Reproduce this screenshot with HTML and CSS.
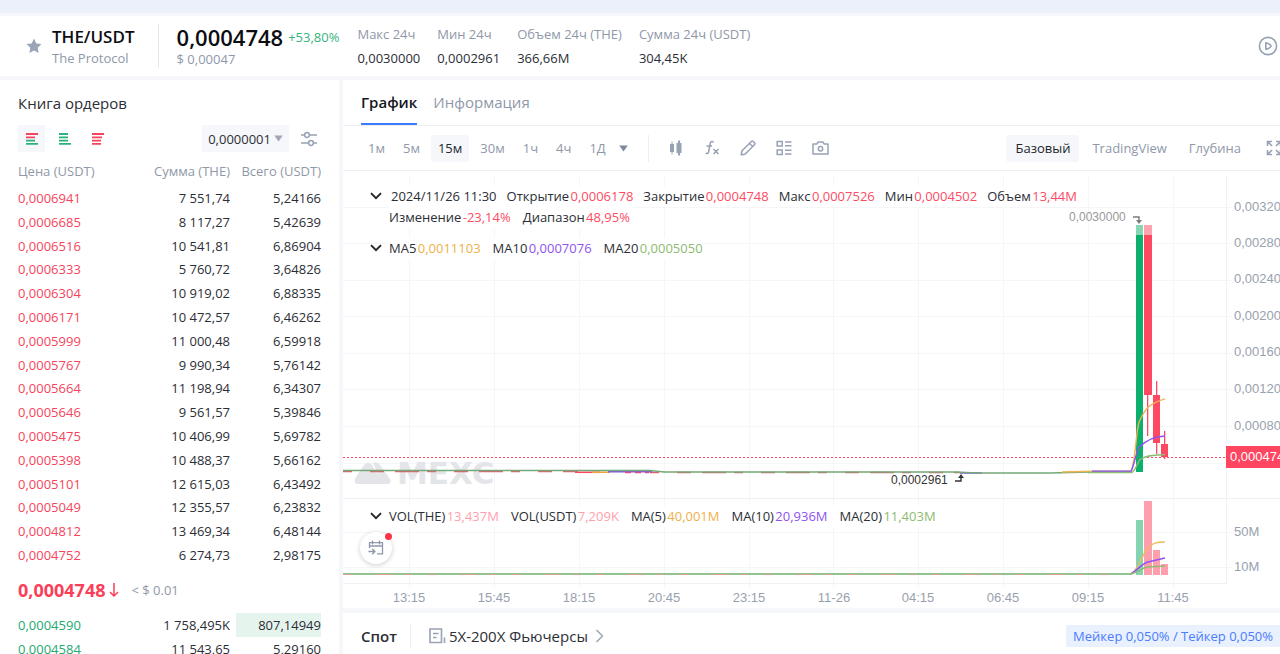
FILE: index.html
```html
<!DOCTYPE html>
<html lang="ru">
<head>
<meta charset="utf-8">
<title>THE/USDT</title>
<meta name="viewport" content="width=device-width, initial-scale=1">
<link rel="stylesheet" href="styles.css">
</head>
<body>
<div class="page">
  <div class="top-strip"></div>
  <header class="ticker">
    <button class="icon-btn star" aria-label="В избранное"><svg width="16" height="16" viewBox="0 0 16 16"><path d="M8 0.6l2.3 4.8 5.2.7-3.8 3.6.9 5.3L8 12.5 3.4 15l.9-5.3L.5 6.1l5.2-.7z" fill="#9aa5b8"/></svg></button>
    <div class="pair"><h1 class="pair-name">THE/USDT</h1><div class="sub">The Protocol</div></div>
    <div class="last">
      <div class="last-row"><span class="last-price">0,0004748</span><span class="up">+53,80%</span></div>
      <div class="sub">$ 0,00047</div>
    </div>
    <dl class="stats">
      <div class="stat"><dt>Макс 24ч</dt><dd>0,0030000</dd></div>
      <div class="stat"><dt>Мин 24ч</dt><dd>0,0002961</dd></div>
      <div class="stat"><dt>Объем 24ч (THE)</dt><dd>366,66M</dd></div>
      <div class="stat"><dt>Сумма 24ч (USDT)</dt><dd>304,45K</dd></div>
    </dl>
    <button class="icon-btn play" aria-label="Обучение"><svg width="20" height="20" viewBox="0 0 20 20" fill="none" stroke="#98a2b5" stroke-width="1.6"><circle cx="10" cy="10" r="8.6"/><path d="M7.8 6.7v6.6c2.600-.6 4.700-1.900 5.200-3.300-.5-1.400-2.600-2.700-5.200-3.300z" stroke-linejoin="round"/></svg></button>
  </header>

  <div class="columns">
    <section class="book">
      <h2 class="book-title">Книга ордеров</h2>
      <div class="book-tools">
        <button class="mode active" aria-label="Все ордера"><svg width="14" height="12" viewBox="0 0 14 12"><path d="M1 1h12M1 4.300h9" stroke="#f5455c" stroke-width="1.800"/><path d="M1 7.600h9M1 10.900h12" stroke="#2bb27a" stroke-width="1.800"/></svg></button>
        <button class="mode" aria-label="Покупка"><svg width="14" height="12" viewBox="0 0 14 12"><path d="M1 1h9M1 4.300h9M1 7.600h9M1 10.900h12" stroke="#2bb27a" stroke-width="1.800"/></svg></button>
        <button class="mode" aria-label="Продажа"><svg width="14" height="12" viewBox="0 0 14 12"><path d="M1 1h12M1 4.300h10M1 7.600h9M1 10.900h9" stroke="#f5455c" stroke-width="1.800"/></svg></button>
        <button class="precision">0,0000001<svg width="9" height="7" viewBox="0 0 9 7"><path d="M.3.5h8.400L4.500 6.500z" fill="#a0a6b2"/></svg></button>
        <button class="icon-btn" aria-label="Настройки"><svg width="16" height="16" viewBox="0 0 16 16" fill="none" stroke="#98a2b5" stroke-width="1.500"><path d="M0 4h3.500M8.500 4H16M0 12h7.500M12.500 12H16"/><circle cx="6" cy="4" r="2.400"/><circle cx="10" cy="12" r="2.400"/></svg></button>
      </div>
      <table class="orders asks">
        <thead><tr><th>Цена (USDT)</th><th>Сумма (THE)</th><th>Всего (USDT)</th></tr></thead>
        <tbody>
        <tr><td>0,0006941</td><td>7 551,74</td><td>5,24166</td></tr>
        <tr><td>0,0006685</td><td>8 117,27</td><td>5,42639</td></tr>
        <tr><td>0,0006516</td><td>10 541,81</td><td>6,86904</td></tr>
        <tr><td>0,0006333</td><td>5 760,72</td><td>3,64826</td></tr>
        <tr><td>0,0006304</td><td>10 919,02</td><td>6,88335</td></tr>
        <tr><td>0,0006171</td><td>10 472,57</td><td>6,46262</td></tr>
        <tr><td>0,0005999</td><td>11 000,48</td><td>6,59918</td></tr>
        <tr><td>0,0005767</td><td>9 990,34</td><td>5,76142</td></tr>
        <tr><td>0,0005664</td><td>11 198,94</td><td>6,34307</td></tr>
        <tr><td>0,0005646</td><td>9 561,57</td><td>5,39846</td></tr>
        <tr><td>0,0005475</td><td>10 406,99</td><td>5,69782</td></tr>
        <tr><td>0,0005398</td><td>10 488,37</td><td>5,66162</td></tr>
        <tr><td>0,0005101</td><td>12 615,03</td><td>6,43492</td></tr>
        <tr><td>0,0005049</td><td>12 355,57</td><td>6,23832</td></tr>
        <tr><td>0,0004812</td><td>13 469,34</td><td>6,48144</td></tr>
        <tr><td>0,0004752</td><td>6 274,73</td><td>2,98175</td></tr>
        </tbody>
      </table>
      <div class="mid"><span class="mid-price">0,0004748</span><svg width="12" height="14" viewBox="0 0 12 14" fill="none" stroke="#fb3f5a" stroke-width="1.500"><path d="M6 0v13M2 9l4 4 4-4"/></svg><span class="sub">&lt; $ 0.01</span></div>
      <table class="orders bids">
        <tbody>
        <tr><td>0,0004590</td><td>1 758,495K</td><td class="depth">807,14949</td></tr>
        <tr><td>0,0004584</td><td>11 543,65</td><td>5,29160</td></tr>
        </tbody>
      </table>
    </section>

    <main class="main">
      <section class="chart-card">
        <nav class="tabs"><button class="tab active">График</button><button class="tab">Информация</button></nav>
        <div class="toolbar">
          <div class="frames">
            <button class="chip">1м</button><button class="chip">5м</button><button class="chip active">15м</button><button class="chip">30м</button><button class="chip">1ч</button><button class="chip">4ч</button><button class="chip">1Д</button>
            <button class="icon-btn more" aria-label="Другие интервалы"><svg width="9" height="7" viewBox="0 0 9 7"><path d="M.2.5h8.600L4.500 6.500z" fill="#7f899c"/></svg></button>
          </div>
          <div class="tools">
            <button class="icon-btn" aria-label="Тип графика"><svg width="16" height="16" viewBox="0 0 16 16" fill="#98a2b5"><path d="M2 4h1.500V1.500h1V4H6v8H4.500v2.500h-1V12H2zM8.500 3H10V.5h2V3h1.500v10H12v2.500h-2V13H8.500z"/></svg></button>
            <button class="icon-btn" aria-label="Индикаторы"><svg width="16" height="16" viewBox="0 0 16 16" fill="none" stroke="#98a2b5" stroke-width="1.500"><path d="M9.500 2.500C8.800 1 6.600 1.200 6.200 3.500L4.600 12c-.4 1.800-2 2-3 1M2.500 6h5.500M9.500 9l5 5M14.500 9l-5 5"/></svg></button>
            <button class="icon-btn" aria-label="Рисование"><svg width="16" height="16" viewBox="0 0 16 16" fill="none" stroke="#98a2b5" stroke-width="1.500" stroke-linejoin="round"><path d="M1.200 14.800l.6-3.800L11.300 1.500q1-.8 2 0l1.200 1.200q.8 1 0 2L5 14.200zM9.500 3.500l3 3"/></svg></button>
            <button class="icon-btn" aria-label="Макет"><svg width="16" height="16" viewBox="0 0 16 16" fill="none" stroke="#98a2b5" stroke-width="1.500"><path d="M1.200 1.500h5v4.500h-5zM1.200 10h5v4.500h-5zM9 2h6.500M9 5.700h6.500M9 10.300h6.500M9 14h6.500"/></svg></button>
            <button class="icon-btn" aria-label="Снимок"><svg width="17" height="16" viewBox="0 0 17 16" fill="none" stroke="#98a2b5" stroke-width="1.500" stroke-linejoin="round"><path d="M1 4h3.800l1.400-2h4.600l1.400 2H16v10H1z"/><circle cx="8.500" cy="8.700" r="2.200"/></svg></button>
          </div>
          <div class="views">
            <button class="chip active">Базовый</button><button class="chip">TradingView</button><button class="chip">Глубина</button>
            <button class="icon-btn full" aria-label="На весь экран"><svg width="16" height="16" viewBox="0 0 16 16" fill="none" stroke="#98a2b5" stroke-width="1.600"><path d="M1.500 6V1.500H6M1.500 1.500L6 6M10 1.500h4.500V6M14.500 1.500L10 6M1.500 10v4.500H6M1.500 14.500L6 10M10 14.500h4.500V10M14.500 14.500L10 10"/></svg></button>
          </div>
        </div>
        <div class="chart">
          <svg class="plot" viewBox="343 171 937 437" role="img" aria-label="График THE/USDT">
            <path class="grid" d="M343 207.500h889M343 243.500h889M343 280.500h889M343 316.500h889M343 353.500h889M343 389.500h889M343 426.500h889M343 463.500h889M343 532.500h889M343 567.500h889M409.500 176v412M494.500 176v412M579.500 176v412M664.500 176v412M749.500 176v412M833.500 176v412M918.500 176v412M1003.500 176v412M1088.500 176v412M1173.500 176v412"/>
            <path class="grid pane" d="M343 498.500h937M343 583.500h883M1226.500 176v408"/>
            <g fill="#e3e5e9">
              <path d="M356 484q-3-3 0-7l8-12q4-5 8 0l12 19zM373 463q4-2 7 2l10 14q2 4-2 5h-5z"/>
              <text class="mark" x="397" y="484">MEXC</text>
            </g>
            <g class="axis">
              <text x="1234" y="211">0,00320</text><text x="1234" y="247">0,00280</text><text x="1234" y="283">0,00240</text><text x="1234" y="320">0,00200</text><text x="1234" y="356">0,00160</text><text x="1234" y="393">0,00120</text><text x="1234" y="430">0,00080</text>
              <text x="1234" y="536">50M</text><text x="1234" y="571">10M</text>
            </g>
            <g class="axis time">
              <text x="409" y="602">13:15</text><text x="494" y="602">15:45</text><text x="579" y="602">18:15</text><text x="664" y="602">20:45</text><text x="749" y="602">23:15</text><text x="834" y="602">11-26</text><text x="918" y="602">04:15</text><text x="1003" y="602">06:45</text><text x="1088" y="602">09:15</text><text x="1173" y="602">11:45</text>
            </g>
            <path d="M343 457.500h883" fill="none" stroke="#ff4d66" stroke-width="1" stroke-dasharray="2 2"/>
            <g fill="none" stroke-width="1.500">
              <path d="M343 471.500h235M650 472.500h310" stroke="#e2606e" stroke-dasharray="9 18 14 11 24 8"/>
              <path d="M575 472.300h25" stroke="#ff4560"/><path d="M592 472.300h18" stroke="#f0a43c"/><path d="M608 471.800h44M960 473h22" stroke="#8655e8"/><path d="M625 472.500h24" stroke="#e04a86" stroke-dasharray="6 4"/>
              <path d="M343 470.500h307l14 1.500h292l20 1h74l40-1h42" stroke="#74a877"/>
            </g>
            <path fill="#0caf6b" d="M1136 235h7v237h-7z"/><path fill="#87d7b5" d="M1136 225h7v10h-7z"/>
            <path fill="#ff4861" d="M1144 235h8v160h-8zM1147 395h1.300v41h-1.300zM1153 395h7v48h-7zM1156 381h1.300v73h-1.300zM1161 444h7v13h-7zM1164 431h1.300v28h-1.300z"/><path fill="#ffa3b0" d="M1144 225h8v10h-8z"/>
            <g fill="none" stroke-width="1.400">
              <path d="M1062 472l30-.8h39c4-6 5-39 8-49 4-9 6-12 9-15 6-5 12-7 17-8.400" stroke="#efb351"/>
              <path d="M1092 471.300h39c3-5 5-19 8-24 7-7 17-11 26-11.300" stroke="#8e52f1"/>
              <path d="M1088 472.500h44c4-3 5-9 8-13 7-5 15-4 25-5" stroke="#8dbb70"/>
            </g>
            <text class="note light" x="1069" y="221">0,0030000</text>
            <path d="M1133 217h6v4" fill="none" stroke="#7c7c7c" stroke-width="1.400"/><path d="M1136 220h6l-3 4z" fill="#7c7c7c"/>
            <text class="note" x="891" y="484">0,0002961</text>
            <path d="M955 481h6v-4" fill="none" stroke="#333" stroke-width="1.400"/><path d="M958 478h6l-3-4z" fill="#333"/>
            <path fill="#ff4560" d="M1226 446h54v22h-54z"/><text class="tag" x="1230" y="461">0,000474</text>
            <path fill="#84d3b1" d="M1136 520h7v55h-7z"/><path fill="#ff9fae" d="M1144 501h8v74h-8zM1153 550h7v25h-7zM1161 564h7v11h-7z"/>
            <g fill="none" stroke-width="1.500">
              <path d="M343 574h788" stroke="#90c490" stroke-width="2"/><path d="M343 574.500h788" stroke="#d5a78f" stroke-width="1" stroke-dasharray="10 22 18 12 7 15"/>
              <path d="M1131 574c8-5 10-18 17-26 4-5 9-6 17-6" stroke="#f1b95f"/><path d="M1131 574c8-5 10-10 17-12l17-4" stroke="#8e52f1"/><path d="M1131 574c8-2 10-6 17-7l17-1" stroke="#8dbb70"/>
            </g>
          </svg>
          <div class="legends">
            <div class="legend"><button class="icon-btn fold" aria-label="Свернуть"><svg width="12" height="8" viewBox="0 0 12 8" fill="none" stroke="#222" stroke-width="1.800"><path d="M1 1.200l5 5 5-5"/></svg></button>
              <div>
                <div class="legend-row tight"><span class="date">2024/11/26 11:30</span><span>Открытие <b>0,0006178</b></span><span>Закрытие <b>0,0004748</b></span><span>Макс <b>0,0007526</b></span><span>Мин <b>0,0004502</b></span><span>Объем <b>13,44M</b></span></div>
                <div class="legend-row"><span>Изменение <b>-23,14%</b></span><span>Диапазон <b>48,95%</b></span></div>
              </div></div>
            <div class="legend"><button class="icon-btn fold" aria-label="Свернуть"><svg width="12" height="8" viewBox="0 0 12 8" fill="none" stroke="#222" stroke-width="1.800"><path d="M1 1.200l5 5 5-5"/></svg></button>
              <div class="legend-row"><span>MA5 <b class="ma5">0,0011103</b></span><span>MA10 <b class="ma10">0,0007076</b></span><span>MA20 <b class="ma20">0,0005050</b></span></div></div>
          </div>
          <div class="legends volume">
            <div class="legend"><button class="icon-btn fold" aria-label="Свернуть"><svg width="12" height="8" viewBox="0 0 12 8" fill="none" stroke="#222" stroke-width="1.800"><path d="M1 1.200l5 5 5-5"/></svg></button>
              <div class="legend-row"><span>VOL(THE) <b class="soft">13,437M</b></span><span>VOL(USDT) <b class="soft">7,209K</b></span><span>MA(5) <b class="ma5">40,001M</b></span><span>MA(10) <b class="ma10">20,936M</b></span><span>MA(20) <b class="ma20">11,403M</b></span></div></div>
          </div>
          <button class="goto" aria-label="Перейти к дате"><svg width="16" height="16" viewBox="0 0 16 16" fill="none" stroke="#8e98ab" stroke-width="1.300"><path d="M1.500 8V2.700h13v11.200H9M1.500 6h13M4.500.5v4M11.500.5v4M.5 11.500h6M4.200 8.800l2.700 2.700-2.700 2.700"/></svg><span class="dot"></span></button>
        </div>
      </section>
      <section class="trade">
        <button class="trade-tab">Спот</button>
        <a class="futures" href="#"><svg width="17" height="16" viewBox="0 0 17 16" fill="none" stroke="#98a2b5" stroke-width="1.600"><path d="M1 1h11.500v13.500H1zM4 5.500h5.500M4 9.500h3.500M15.500 9.500V15"/></svg>5X-200X Фьючерсы<svg class="chev" width="9" height="14" viewBox="0 0 9 14" fill="none" stroke="#98a2b5" stroke-width="1.400"><path d="M1.500 1l6 6-6 6"/></svg></a>
        <span class="fees">Мейкер 0,050% / Тейкер 0,050%</span>
      </section>
    </main>
  </div>
</div>
</body>
</html>
```
FILE: styles.css
```css
* { box-sizing: border-box; }
body { margin: 0; font: 13px/20px "Open Sans", "Noto Sans", sans-serif; color: #2b2e35; background: #f6f7fa; }
button { border: 0; margin: 0; padding: 0; background: none; font: inherit; color: inherit; cursor: pointer; }
h1, h2, dl, dd { margin: 0; font-weight: 400; }
a { color: inherit; text-decoration: none; }
svg { display: block; flex: none; }
.page { display: flex; flex-direction: column; height: 100vh; overflow: hidden; }
.top-strip { flex: none; height: 13px; background: #ebf0fb; }
.icon-btn { display: flex; align-items: center; justify-content: center; flex: none; }
.sub { color: #8f98a9; }

.ticker { flex: none; display: flex; align-items: center; height: 60px; margin-top: 3px; padding-left: 26px; background: #fff; }
.pair { margin-left: 10px; }
.pair-name { font-size: 17px; line-height: 24px; font-weight: 600; color: #0b0d12; }
.pair .sub, .last .sub { line-height: 18px; }
.last { margin-left: 23px; padding-left: 18px; border-left: 1px solid #e6e8ec; }
.last-row { display: flex; align-items: center; gap: 5px; height: 26px; }
.last-price { font-size: 22px; font-weight: 600; color: #0b0d12; }
.up { color: #36b37e; }
.stats { display: flex; gap: 17px; margin-left: 18px; line-height: 24px; white-space: nowrap; }
.stat dt { color: #8f98a9; }
.play { margin-left: auto; margin-right: 2px; }

.columns { flex: 1; min-height: 0; display: flex; gap: 4px; margin-top: 4px; }
.book { flex: none; width: 339px; padding: 13px 18px 0; background: #fff; }
.book-title { font-size: 15px; line-height: 20px; }
.book-tools { display: flex; align-items: center; margin-top: 12px; }
.mode { display: flex; align-items: center; justify-content: center; width: 27px; height: 27px; margin-right: 6px; }
.mode.active { background: #f5f7fa; }
.precision { display: flex; align-items: center; gap: 3px; height: 27px; margin-left: auto; margin-right: 12px; padding: 0 6px; background: #f5f7fa; }
.book-tools .icon-btn { margin-right: 4px; }
.orders { width: 100%; border-collapse: collapse; table-layout: fixed; }
.orders th, .orders td { padding: 0; width: 91px; text-align: right; font-weight: 400; white-space: nowrap; }
.orders th { height: 34px; padding-top: 3px; color: #8f98a9; }
.orders th:first-child, .orders td:first-child { width: auto; text-align: left; }
.asks { height: 415px; }
.asks td:first-child { color: #f5455c; }
.bids td { height: 24px; }
.bids td:first-child { color: #22a871; }
.bids .depth { background: linear-gradient(90deg, transparent 6px, #e5f5ee 6px); }
.mid { display: flex; align-items: center; height: 46px; }
.mid-price { font-size: 18px; font-weight: 700; color: #fb3f5a; }
.mid svg { margin: 0 11px 0 3px; }

.main { flex: 1; min-width: 0; display: flex; flex-direction: column; gap: 5px; }
.chart-card { flex: none; background: #fff; }
.tabs { display: flex; gap: 16px; height: 46px; padding-left: 18px; border-bottom: 1px solid #eceef1; }
.tab { font-size: 15px; color: #8f98a9; border-bottom: 2px solid transparent; }
.tab.active { color: #14171d; font-weight: 600; border-color: #3a7bff; }
.toolbar { display: flex; align-items: center; height: 45px; padding-left: 18px; border-bottom: 1px solid #eceef1; color: #8f98a9; }
.frames, .tools, .views { display: flex; align-items: center; }
.chip { height: 27px; padding: 0 7px; border-radius: 3px; }
.chip.active { background: #f5f7fa; color: #23262d; }
.frames { gap: 4px; padding-right: 20px; border-right: 1px solid #eceef1; }
.more { margin-left: 2px; }
.tools { gap: 20px; margin-left: 19px; }
.views { gap: 4px; margin-left: auto; }
.views .chip { padding: 0 9px; }
.full { margin-left: 12px; margin-right: -2px; }

.chart { position: relative; }
.plot { width: 100%; height: auto; }
.grid { fill: none; stroke: #f5f6f8; }
.pane { stroke: #f0f1f4; }
.mark { font: 700 31px "DejaVu Sans", sans-serif; }
.axis { font: 13px "Liberation Sans", Arial, sans-serif; fill: #98a1ae; }
.time { text-anchor: middle; }
.note { font: 12px "Liberation Sans", Arial, sans-serif; fill: #333; }
.light { fill: #999; }
.tag { font: 13px "Liberation Sans", Arial, sans-serif; fill: #fff; }
.legends { position: absolute; top: 15px; left: 26px; display: flex; flex-direction: column; align-items: flex-start; gap: 10px; line-height: 21px; white-space: nowrap; }
.volume { top: 335px; }
.legend { display: flex; align-items: flex-start; }
.fold { width: 14px; height: 20px; margin-right: 6px; }
.legend-row { display: flex; gap: 12px; width: max-content; background: #fff; }
.tight { gap: 10px; }
.legend b { font-weight: 400; color: #fb4c64; margin-left: -2px; }
.legend .ma5 { color: #f0b04a; }
.legend .ma10 { color: #8e52f1; }
.legend .ma20 { color: #8dbb70; }
.legend .soft { color: #ff9fae; }
.date { margin-left: 2px; }
.goto { position: absolute; left: 17px; top: 361px; width: 32px; height: 32px; display: flex; align-items: center; justify-content: center; border-radius: 50%; background: #fff; box-shadow: 0 1px 5px rgba(0, 0, 0, .2); }
.dot { position: absolute; top: 1px; right: 0; width: 7px; height: 7px; border-radius: 50%; background: #fb3449; }

.trade { flex: none; display: flex; align-items: center; height: 46px; padding-left: 18px; background: #fff; font-size: 15px; }
.trade-tab { height: 24px; padding-right: 13px; font-weight: 600; border-right: 1px solid #eceef1; }
.futures { display: flex; align-items: center; gap: 3px; margin-left: 18px; }
.chev { margin-left: 4px; }
.fees { margin-left: auto; padding: 0 7px; font-size: 13px; line-height: 22px; color: #4a7dfc; background: #e9f0fe; }
```
